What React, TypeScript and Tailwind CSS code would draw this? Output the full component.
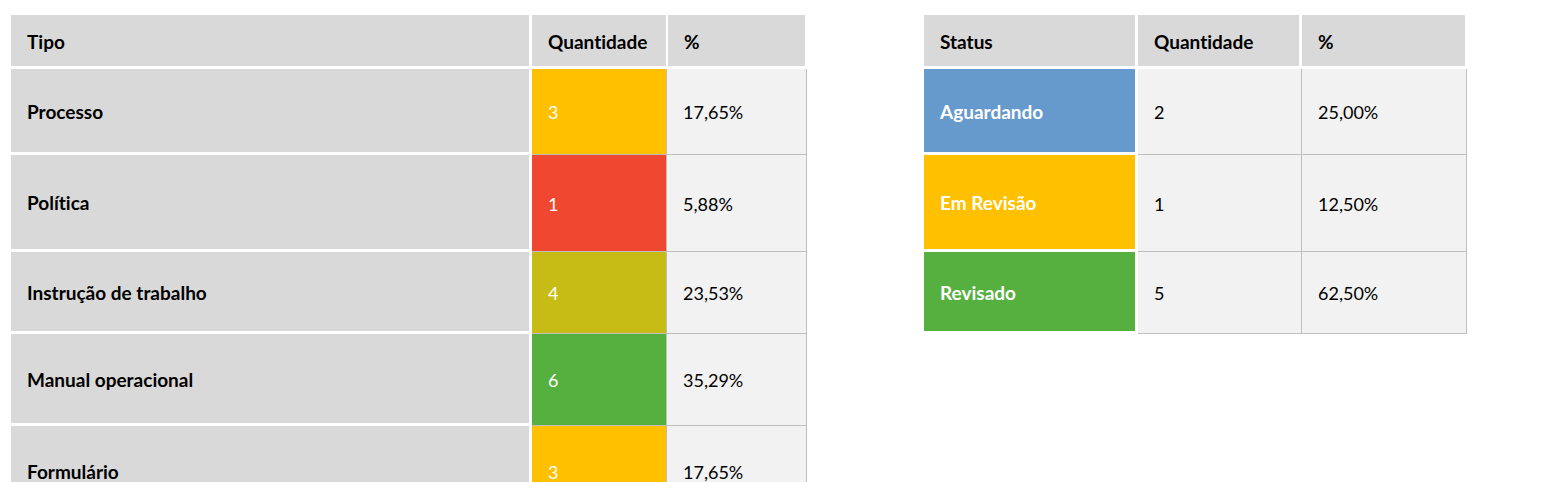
import React from "react";

type Row = { label: string; qty: number; pct: string; color: string; h: string };

const tipos: Row[] = [
  { label: "Processo", qty: 3, pct: "17,65%", color: "bg-[#ffc000]", h: "h-[86px]" },
  { label: "Política", qty: 1, pct: "5,88%", color: "bg-[#f04830]", h: "h-[97px]" },
  { label: "Instrução de trabalho", qty: 4, pct: "23,53%", color: "bg-[#c7bc15]", h: "h-[82px]" },
  { label: "Manual operacional", qty: 6, pct: "35,29%", color: "bg-[#56b040]", h: "h-[92px]" },
  { label: "Formulário", qty: 3, pct: "17,65%", color: "bg-[#ffc000]", h: "h-[92px]" },
];

const statuses: Row[] = [
  { label: "Aguardando", qty: 2, pct: "25,00%", color: "bg-[#6699cc]", h: "h-[86px]" },
  { label: "Em Revisão", qty: 1, pct: "12,50%", color: "bg-[#ffc000]", h: "h-[97px]" },
  { label: "Revisado", qty: 5, pct: "62,50%", color: "bg-[#56b040]", h: "h-[82px]" },
];

function HeaderCell({ children, className }: { children: React.ReactNode; className: string }) {
  return (
    <div className={`flex items-center pl-4 pt-[2px] bg-[#d9d9d9] font-bold text-[19px] text-black ${className}`}>
      {children}
    </div>
  );
}

export default function App() {
  return (
    <div
      className="w-[1554px] h-[482px] overflow-hidden bg-white flex items-start gap-[117px] pl-[11px] pt-[15px] text-[18px] leading-none [font-variant-ligatures:none]"
      style={{ fontFamily: "Lato, 'Open Sans', sans-serif" }}
    >
      {/* Tipo table */}
      <div className="flex flex-col shrink-0">
        <div className="flex h-[51px] mb-[3px] shrink-0">
          <HeaderCell className="w-[518px]">Tipo</HeaderCell>
          <HeaderCell className="w-[134px] ml-[3px]">Quantidade</HeaderCell>
          <HeaderCell className="w-[137px] ml-[2px]">%</HeaderCell>
        </div>
        {tipos.map((r) => (
          <div key={r.label} className={`flex ${r.h} shrink-0`}>
            <div className="w-[518px] flex items-center pl-4 pt-[1px] bg-[#d9d9d9] border-b-[3px] border-white font-bold text-[19px] text-black">
              {r.label}
            </div>
            <div
              className={`w-[135px] ml-[3px] flex items-center pl-4 pt-[1px] border-b border-r border-[#bfbfbf] text-white ${r.color}`}
            >
              {r.qty}
            </div>
            <div className="w-[140px] flex items-center pl-4 pt-[1px] bg-[#f2f2f2] border-b border-r border-[#bfbfbf] text-black">
              {r.pct}
            </div>
          </div>
        ))}
      </div>

      {/* Status table */}
      <div className="flex flex-col shrink-0">
        <div className="flex h-[51px] mb-[3px] shrink-0">
          <HeaderCell className="w-[211px]">Status</HeaderCell>
          <HeaderCell className="w-[161px] ml-[3px]">Quantidade</HeaderCell>
          <HeaderCell className="w-[163px] ml-[3px]">%</HeaderCell>
        </div>
        {statuses.map((r) => (
          <div key={r.label} className={`flex ${r.h} shrink-0`}>
            <div
              className={`w-[211px] flex items-center pl-4 pt-[1px] border-b-[3px] border-white font-bold text-[19px] text-white ${r.color}`}
            >
              {r.label}
            </div>
            <div className="w-[164px] ml-[3px] flex items-center pl-4 pt-[1px] bg-[#f2f2f2] border-b border-r border-[#bfbfbf] text-black">
              {r.qty}
            </div>
            <div className="w-[165px] flex items-center pl-4 pt-[1px] bg-[#f2f2f2] border-b border-r border-[#bfbfbf] text-black">
              {r.pct}
            </div>
          </div>
        ))}
      </div>
    </div>
  );
}
